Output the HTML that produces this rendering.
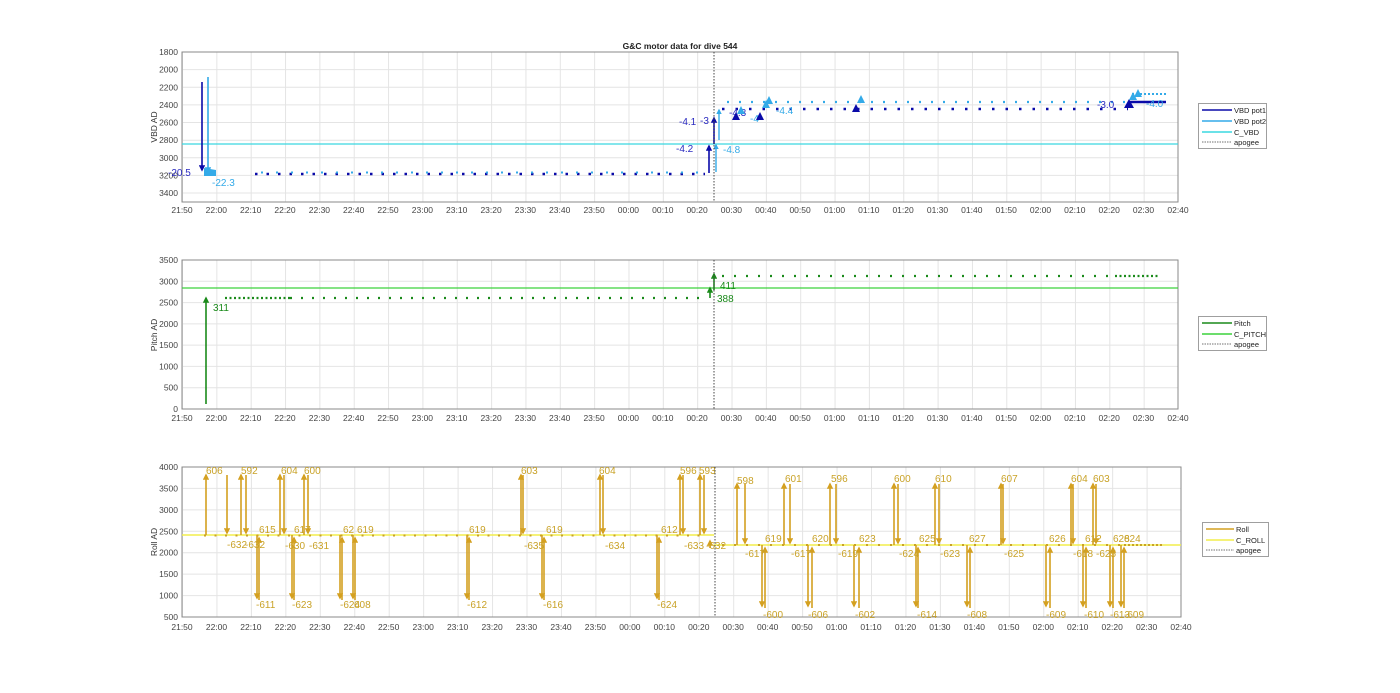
<!DOCTYPE html>
<html><head><meta charset="utf-8"><style>
html,body{margin:0;padding:0;background:#fff;width:1400px;height:693px;overflow:hidden}
svg{display:block;font-family:"Liberation Sans",sans-serif}
.t{font-size:8.5px;fill:#444;text-anchor:middle}
.yl{font-size:8.5px;fill:#444;text-anchor:end}
.g{font-size:10px;fill:#c9a227}
.lg{font-size:7.5px;fill:#222}
</style></head><body>
<svg width="1400" height="693" viewBox="0 0 1400 693">
<defs>
<pattern id="vg1" x="182" y="0" width="34.345" height="700" patternUnits="userSpaceOnUse"><line x1="0.5" y1="0" x2="0.5" y2="700" stroke="#e4e4e4" stroke-width="1"/></pattern>
<pattern id="vg3" x="182" y="0" width="34.45" height="700" patternUnits="userSpaceOnUse"><line x1="0.5" y1="0" x2="0.5" y2="700" stroke="#e4e4e4" stroke-width="1"/></pattern>
<marker id="ag" markerWidth="4" markerHeight="4" refX="3" refY="2" orient="auto" markerUnits="strokeWidth"><path d="M0,0 L4,2 L0,4z" fill="#d4a020"/></marker>
<marker id="ab" markerWidth="4" markerHeight="4" refX="3" refY="2" orient="auto" markerUnits="strokeWidth"><path d="M0,0 L4,2 L0,4z" fill="#0a0aa8"/></marker>
<marker id="al" markerWidth="4" markerHeight="4" refX="3" refY="2" orient="auto" markerUnits="strokeWidth"><path d="M0,0 L4,2 L0,4z" fill="#33aae8"/></marker>
<marker id="agr" markerWidth="4" markerHeight="4" refX="3" refY="2" orient="auto" markerUnits="strokeWidth"><path d="M0,0 L4,2 L0,4z" fill="#1a8a1a"/></marker>
</defs>

<text x="680" y="49" style="font-size:8.5px;font-weight:bold;fill:#222" text-anchor="middle">G&amp;C motor data for dive 544</text>

<!-- ========== PLOT 1 ========== -->
<rect x="182" y="52" width="996" height="150" fill="url(#vg1)"/>
<g stroke="#e4e4e4" stroke-width="1">
<line x1="182" y1="69.6" x2="1178" y2="69.6"/><line x1="182" y1="87.3" x2="1178" y2="87.3"/><line x1="182" y1="104.9" x2="1178" y2="104.9"/><line x1="182" y1="122.5" x2="1178" y2="122.5"/><line x1="182" y1="140.2" x2="1178" y2="140.2"/><line x1="182" y1="157.8" x2="1178" y2="157.8"/><line x1="182" y1="175.4" x2="1178" y2="175.4"/><line x1="182" y1="193" x2="1178" y2="193"/>
</g>
<rect x="182" y="52" width="996" height="150" fill="none" stroke="#8a8a8a" stroke-width="1"/>
<g class="yl"><text x="178" y="55">1800</text><text x="178" y="72.6">2000</text><text x="178" y="90.3">2200</text><text x="178" y="107.9">2400</text><text x="178" y="125.5">2600</text><text x="178" y="143.2">2800</text><text x="178" y="160.8">3000</text><text x="178" y="178.4">3200</text><text x="178" y="196">3400</text></g>
<text transform="translate(157,127) rotate(-90)" style="font-size:8.5px;fill:#333" text-anchor="middle">VBD AD</text>
<g class="t">
<text x="182" y="213">21:50</text><text x="216.3" y="213">22:00</text><text x="250.7" y="213">22:10</text><text x="285" y="213">22:20</text><text x="319.4" y="213">22:30</text><text x="353.7" y="213">22:40</text><text x="388" y="213">22:50</text><text x="422.4" y="213">23:00</text><text x="456.7" y="213">23:10</text><text x="491.1" y="213">23:20</text><text x="525.4" y="213">23:30</text><text x="559.7" y="213">23:40</text><text x="594.1" y="213">23:50</text><text x="628.4" y="213">00:00</text><text x="662.8" y="213">00:10</text><text x="697.1" y="213">00:20</text><text x="731.4" y="213">00:30</text><text x="765.8" y="213">00:40</text><text x="800.1" y="213">00:50</text><text x="834.5" y="213">01:00</text><text x="868.8" y="213">01:10</text><text x="903.1" y="213">01:20</text><text x="937.5" y="213">01:30</text><text x="971.8" y="213">01:40</text><text x="1006.2" y="213">01:50</text><text x="1040.5" y="213">02:00</text><text x="1074.8" y="213">02:10</text><text x="1109.2" y="213">02:20</text><text x="1143.5" y="213">02:30</text><text x="1178" y="213">02:40</text>
</g>
<line x1="182" y1="144" x2="1178" y2="144" stroke="#3ad8e0" stroke-width="1.3"/>
<line x1="255" y1="174" x2="705" y2="174" stroke="#0a0aa8" stroke-width="2.5" stroke-dasharray="2.5 9"/>
<line x1="261" y1="172.5" x2="705" y2="172.5" stroke="#33aae8" stroke-width="2" stroke-dasharray="2 13"/>
<line x1="722" y1="109" x2="1128" y2="109" stroke="#0a0aa8" stroke-width="2.5" stroke-dasharray="2.5 11"/>
<line x1="727" y1="102" x2="1128" y2="102" stroke="#33aae8" stroke-width="2.2" stroke-dasharray="2 10"/>
<line x1="1128" y1="102" x2="1166" y2="102" stroke="#0a0aa8" stroke-width="2.5"/>
<line x1="1132" y1="94" x2="1166" y2="94" stroke="#33aae8" stroke-width="2" stroke-dasharray="2 2"/>
<line x1="202" y1="82" x2="202" y2="170" stroke="#0a0aa8" stroke-width="1.6" marker-end="url(#ab)"/>
<line x1="208" y1="77" x2="208" y2="172" stroke="#33aae8" stroke-width="1.6" marker-end="url(#al)"/>
<path d="M204,168 l12,2 v6 h-12z" fill="#33aae8"/>
<text x="168" y="176" style="font-size:10px;fill:#2b2bc0">-20.5</text>
<text x="212" y="186" style="font-size:10px;fill:#33aae8">-22.3</text>
<line x1="709" y1="173" x2="709" y2="146" stroke="#0a0aa8" stroke-width="1.6" marker-end="url(#ab)"/>
<line x1="714" y1="144" x2="714" y2="118" stroke="#0a0aa8" stroke-width="1.6" marker-end="url(#ab)"/>
<line x1="716" y1="172" x2="716" y2="145" stroke="#33aae8" stroke-width="1.4" marker-end="url(#al)"/>
<line x1="719" y1="140" x2="719" y2="110" stroke="#33aae8" stroke-width="1.4" marker-end="url(#al)"/>
<text x="676" y="152" style="font-size:10px;fill:#2b2bc0">-4.2</text>
<text x="679" y="125" style="font-size:10px;fill:#2b2bc0">-4.1</text>
<text x="700" y="124" style="font-size:10px;fill:#2b2bc0">-3</text>
<text x="723" y="153" style="font-size:10px;fill:#33aae8">-4.8</text>
<text x="729" y="116" style="font-size:10px;fill:#2b2bc0">-4.3</text>
<text x="750" y="122" style="font-size:10px;fill:#33aae8">-4</text>
<text x="776" y="114" style="font-size:10px;fill:#33aae8">-4.4</text>
<g fill="#0a0aa8"><path d="M732,120 l4,-8 l4,8z"/><path d="M756,120 l4,-8 l4,8z"/><path d="M852,112 l4,-8 l4,8z"/><path d="M1124,108 l5,-9 l5,9z"/></g>
<g fill="#33aae8"><path d="M737,114 l4,-8 l4,8z"/><path d="M762,108 l4,-8 l4,8z"/><path d="M765,104 l4,-8 l4,8z"/><path d="M857,103 l4,-8 l4,8z"/><path d="M1129,100 l4,-8 l4,8z"/><path d="M1134,97 l4,-8 l4,8z"/></g>
<text x="1097" y="108" style="font-size:10px;fill:#2b2bc0">-3.0</text>
<text x="1146" y="107" style="font-size:10px;fill:#33aae8">-4.0</text>
<line x1="714" y1="52" x2="714" y2="202" stroke="#444" stroke-width="1" stroke-dasharray="1.5 1.5"/>
<rect x="1198.5" y="103.5" width="68" height="45" fill="#fff" stroke="#888" stroke-width="0.8"/>
<line x1="1202" y1="110" x2="1232" y2="110" stroke="#0a0aa8" stroke-width="1.5"/><text class="lg" x="1234" y="113">VBD pot1</text>
<line x1="1202" y1="121" x2="1232" y2="121" stroke="#33aae8" stroke-width="1.5"/><text class="lg" x="1234" y="124">VBD pot2</text>
<line x1="1202" y1="132" x2="1232" y2="132" stroke="#3ad8e0" stroke-width="1.5"/><text class="lg" x="1234" y="135">C_VBD</text>
<line x1="1202" y1="142" x2="1232" y2="142" stroke="#444" stroke-width="0.8" stroke-dasharray="1.5 1"/><text class="lg" x="1234" y="145">apogee</text>

<!-- ========== PLOT 2 ========== -->
<rect x="182" y="260" width="996" height="149" fill="url(#vg1)"/>
<g stroke="#e4e4e4" stroke-width="1">
<line x1="182" y1="281.3" x2="1178" y2="281.3"/><line x1="182" y1="302.6" x2="1178" y2="302.6"/><line x1="182" y1="323.9" x2="1178" y2="323.9"/><line x1="182" y1="345.1" x2="1178" y2="345.1"/><line x1="182" y1="366.4" x2="1178" y2="366.4"/><line x1="182" y1="387.7" x2="1178" y2="387.7"/>
</g>
<rect x="182" y="260" width="996" height="149" fill="none" stroke="#8a8a8a" stroke-width="1"/>
<g class="yl"><text x="178" y="263">3500</text><text x="178" y="284.3">3000</text><text x="178" y="305.6">2500</text><text x="178" y="326.9">2000</text><text x="178" y="348.1">1500</text><text x="178" y="369.4">1000</text><text x="178" y="390.7">500</text><text x="178" y="412">0</text></g>
<text transform="translate(157,335) rotate(-90)" style="font-size:8.5px;fill:#333" text-anchor="middle">Pitch AD</text>
<g class="t">
<text x="182" y="421">21:50</text><text x="216.3" y="421">22:00</text><text x="250.7" y="421">22:10</text><text x="285" y="421">22:20</text><text x="319.4" y="421">22:30</text><text x="353.7" y="421">22:40</text><text x="388" y="421">22:50</text><text x="422.4" y="421">23:00</text><text x="456.7" y="421">23:10</text><text x="491.1" y="421">23:20</text><text x="525.4" y="421">23:30</text><text x="559.7" y="421">23:40</text><text x="594.1" y="421">23:50</text><text x="628.4" y="421">00:00</text><text x="662.8" y="421">00:10</text><text x="697.1" y="421">00:20</text><text x="731.4" y="421">00:30</text><text x="765.8" y="421">00:40</text><text x="800.1" y="421">00:50</text><text x="834.5" y="421">01:00</text><text x="868.8" y="421">01:10</text><text x="903.1" y="421">01:20</text><text x="937.5" y="421">01:30</text><text x="971.8" y="421">01:40</text><text x="1006.2" y="421">01:50</text><text x="1040.5" y="421">02:00</text><text x="1074.8" y="421">02:10</text><text x="1109.2" y="421">02:20</text><text x="1143.5" y="421">02:30</text><text x="1178" y="421">02:40</text>
</g>
<line x1="182" y1="288" x2="1178" y2="288" stroke="#3cd23c" stroke-width="1.3"/>
<line x1="225" y1="298" x2="290" y2="298" stroke="#1a8a1a" stroke-width="2.2" stroke-dasharray="2 2.5"/>
<line x1="290" y1="298" x2="705" y2="298" stroke="#1a8a1a" stroke-width="2.2" stroke-dasharray="2 9"/>
<line x1="722" y1="276" x2="1115" y2="276" stroke="#1a8a1a" stroke-width="2.2" stroke-dasharray="2 10"/>
<line x1="1115" y1="276" x2="1160" y2="276" stroke="#1a8a1a" stroke-width="2.2" stroke-dasharray="2 2.5"/>
<line x1="206" y1="404" x2="206" y2="298" stroke="#1a8a1a" stroke-width="1.6" marker-end="url(#agr)"/>
<text x="213" y="311" style="font-size:10px;fill:#1a8a1a">311</text>
<line x1="710" y1="298" x2="710" y2="288" stroke="#1a8a1a" stroke-width="1.6" marker-end="url(#agr)"/>
<line x1="714" y1="290" x2="714" y2="274" stroke="#1a8a1a" stroke-width="1.6" marker-end="url(#agr)"/>
<text x="717" y="302" style="font-size:10px;fill:#1a8a1a">388</text>
<text x="720" y="289" style="font-size:10px;fill:#1a8a1a">411</text>
<line x1="714" y1="260" x2="714" y2="409" stroke="#444" stroke-width="1" stroke-dasharray="1.5 1.5"/>
<rect x="1198.5" y="316.5" width="68" height="34" fill="#fff" stroke="#888" stroke-width="0.8"/>
<line x1="1202" y1="323" x2="1232" y2="323" stroke="#1a8a1a" stroke-width="1.5"/><text class="lg" x="1234" y="326">Pitch</text>
<line x1="1202" y1="334" x2="1232" y2="334" stroke="#3cd23c" stroke-width="1.5"/><text class="lg" x="1234" y="337">C_PITCH</text>
<line x1="1202" y1="344" x2="1232" y2="344" stroke="#444" stroke-width="0.8" stroke-dasharray="1.5 1"/><text class="lg" x="1234" y="347">apogee</text>

<!-- ========== PLOT 3 ========== -->
<rect x="182" y="467" width="999" height="150" fill="url(#vg3)"/>
<g stroke="#e4e4e4" stroke-width="1">
<line x1="182" y1="488.4" x2="1181" y2="488.4"/><line x1="182" y1="509.9" x2="1181" y2="509.9"/><line x1="182" y1="531.3" x2="1181" y2="531.3"/><line x1="182" y1="552.7" x2="1181" y2="552.7"/><line x1="182" y1="574.1" x2="1181" y2="574.1"/><line x1="182" y1="595.6" x2="1181" y2="595.6"/>
</g>
<rect x="182" y="467" width="999" height="150" fill="none" stroke="#8a8a8a" stroke-width="1"/>
<g class="yl"><text x="178" y="470">4000</text><text x="178" y="491.4">3500</text><text x="178" y="512.9">3000</text><text x="178" y="534.3">2500</text><text x="178" y="555.7">2000</text><text x="178" y="577.1">1500</text><text x="178" y="598.6">1000</text><text x="178" y="620">500</text></g>
<text transform="translate(157,542) rotate(-90)" style="font-size:8.5px;fill:#333" text-anchor="middle">Roll AD</text>
<g class="t">
<text x="182" y="630">21:50</text><text x="216.5" y="630">22:00</text><text x="250.9" y="630">22:10</text><text x="285.4" y="630">22:20</text><text x="319.8" y="630">22:30</text><text x="354.3" y="630">22:40</text><text x="388.7" y="630">22:50</text><text x="423.2" y="630">23:00</text><text x="457.6" y="630">23:10</text><text x="492.1" y="630">23:20</text><text x="526.5" y="630">23:30</text><text x="561" y="630">23:40</text><text x="595.4" y="630">23:50</text><text x="629.9" y="630">00:00</text><text x="664.3" y="630">00:10</text><text x="698.8" y="630">00:20</text><text x="733.2" y="630">00:30</text><text x="767.7" y="630">00:40</text><text x="802.1" y="630">00:50</text><text x="836.6" y="630">01:00</text><text x="871" y="630">01:10</text><text x="905.5" y="630">01:20</text><text x="939.9" y="630">01:30</text><text x="974.4" y="630">01:40</text><text x="1008.8" y="630">01:50</text><text x="1043.3" y="630">02:00</text><text x="1077.7" y="630">02:10</text><text x="1112.2" y="630">02:20</text><text x="1146.6" y="630">02:30</text><text x="1181" y="630">02:40</text>
</g>
<line x1="182" y1="535" x2="714" y2="535" stroke="#f2ee4c" stroke-width="1.5"/>
<line x1="714" y1="545" x2="1181" y2="545" stroke="#f2ee4c" stroke-width="1.5"/>
<line x1="204" y1="535.5" x2="705" y2="535.5" stroke="#c9a227" stroke-width="2" stroke-dasharray="2 8.5"/>
<line x1="722" y1="545" x2="1120" y2="545" stroke="#c9a227" stroke-width="2" stroke-dasharray="2 10"/>
<line x1="1124" y1="545" x2="1163" y2="545" stroke="#c9a227" stroke-width="2" stroke-dasharray="2 2"/>
<g stroke="#d4a020" stroke-width="1.6">
<!-- pre-apogee -->
<line x1="206" y1="535" x2="206" y2="475" marker-end="url(#ag)"/>
<line x1="227" y1="475" x2="227" y2="533" marker-end="url(#ag)"/>
<line x1="241" y1="535" x2="241" y2="475" marker-end="url(#ag)"/>
<line x1="246" y1="475" x2="246" y2="533" marker-end="url(#ag)"/>
<line x1="257" y1="535" x2="257" y2="598" marker-end="url(#ag)"/><line x1="259" y1="600" x2="259" y2="538" marker-end="url(#ag)"/>
<line x1="280" y1="535" x2="280" y2="475" marker-end="url(#ag)"/><line x1="284" y1="475" x2="284" y2="533" marker-end="url(#ag)"/>
<line x1="292" y1="535" x2="292" y2="598" marker-end="url(#ag)"/><line x1="294" y1="600" x2="294" y2="538" marker-end="url(#ag)"/>
<line x1="304" y1="535" x2="304" y2="475" marker-end="url(#ag)"/><line x1="308" y1="475" x2="308" y2="533" marker-end="url(#ag)"/>
<line x1="340" y1="535" x2="340" y2="598" marker-end="url(#ag)"/><line x1="342" y1="600" x2="342" y2="538" marker-end="url(#ag)"/>
<line x1="353" y1="535" x2="353" y2="598" marker-end="url(#ag)"/><line x1="355" y1="600" x2="355" y2="538" marker-end="url(#ag)"/>
<line x1="467" y1="535" x2="467" y2="598" marker-end="url(#ag)"/><line x1="469" y1="600" x2="469" y2="538" marker-end="url(#ag)"/>
<line x1="521" y1="535" x2="521" y2="475" marker-end="url(#ag)"/><line x1="523" y1="475" x2="523" y2="533" marker-end="url(#ag)"/>
<line x1="542" y1="535" x2="542" y2="598" marker-end="url(#ag)"/><line x1="544" y1="600" x2="544" y2="538" marker-end="url(#ag)"/>
<line x1="600" y1="535" x2="600" y2="475" marker-end="url(#ag)"/><line x1="603" y1="475" x2="603" y2="533" marker-end="url(#ag)"/>
<line x1="657" y1="535" x2="657" y2="598" marker-end="url(#ag)"/><line x1="659" y1="600" x2="659" y2="538" marker-end="url(#ag)"/>
<line x1="680" y1="535" x2="680" y2="475" marker-end="url(#ag)"/><line x1="683" y1="475" x2="683" y2="533" marker-end="url(#ag)"/>
<line x1="700" y1="535" x2="700" y2="475" marker-end="url(#ag)"/><line x1="704" y1="475" x2="704" y2="533" marker-end="url(#ag)"/>
<line x1="710" y1="548" x2="710" y2="541" marker-end="url(#ag)"/>
<!-- post-apogee -->
<line x1="737" y1="545" x2="737" y2="484" marker-end="url(#ag)"/><line x1="745" y1="484" x2="745" y2="543" marker-end="url(#ag)"/>
<line x1="762" y1="545" x2="762" y2="606" marker-end="url(#ag)"/><line x1="765" y1="608" x2="765" y2="548" marker-end="url(#ag)"/>
<line x1="784" y1="545" x2="784" y2="484" marker-end="url(#ag)"/><line x1="790" y1="484" x2="790" y2="543" marker-end="url(#ag)"/>
<line x1="808" y1="545" x2="808" y2="606" marker-end="url(#ag)"/><line x1="812" y1="608" x2="812" y2="548" marker-end="url(#ag)"/>
<line x1="830" y1="545" x2="830" y2="484" marker-end="url(#ag)"/><line x1="836" y1="484" x2="836" y2="543" marker-end="url(#ag)"/>
<line x1="854" y1="545" x2="854" y2="606" marker-end="url(#ag)"/><line x1="859" y1="608" x2="859" y2="548" marker-end="url(#ag)"/>
<line x1="894" y1="545" x2="894" y2="484" marker-end="url(#ag)"/><line x1="898" y1="484" x2="898" y2="543" marker-end="url(#ag)"/>
<line x1="916" y1="545" x2="916" y2="606" marker-end="url(#ag)"/><line x1="918" y1="608" x2="918" y2="548" marker-end="url(#ag)"/>
<line x1="935" y1="545" x2="935" y2="484" marker-end="url(#ag)"/><line x1="939" y1="484" x2="939" y2="543" marker-end="url(#ag)"/>
<line x1="967" y1="545" x2="967" y2="606" marker-end="url(#ag)"/><line x1="970" y1="608" x2="970" y2="548" marker-end="url(#ag)"/>
<line x1="1001" y1="545" x2="1001" y2="484" marker-end="url(#ag)"/><line x1="1003" y1="484" x2="1003" y2="543" marker-end="url(#ag)"/>
<line x1="1046" y1="545" x2="1046" y2="606" marker-end="url(#ag)"/><line x1="1050" y1="608" x2="1050" y2="548" marker-end="url(#ag)"/>
<line x1="1071" y1="545" x2="1071" y2="484" marker-end="url(#ag)"/><line x1="1073" y1="484" x2="1073" y2="543" marker-end="url(#ag)"/>
<line x1="1083" y1="545" x2="1083" y2="606" marker-end="url(#ag)"/><line x1="1086" y1="608" x2="1086" y2="548" marker-end="url(#ag)"/>
<line x1="1093" y1="545" x2="1093" y2="484" marker-end="url(#ag)"/><line x1="1096" y1="484" x2="1096" y2="543" marker-end="url(#ag)"/>
<line x1="1110" y1="545" x2="1110" y2="606" marker-end="url(#ag)"/><line x1="1113" y1="608" x2="1113" y2="548" marker-end="url(#ag)"/>
<line x1="1121" y1="545" x2="1121" y2="606" marker-end="url(#ag)"/><line x1="1124" y1="608" x2="1124" y2="548" marker-end="url(#ag)"/>
</g>
<g class="g">
<text x="206" y="474">606</text><text x="241" y="474">592</text><text x="281" y="474">604</text><text x="304" y="474">600</text><text x="521" y="474">603</text><text x="599" y="474">604</text><text x="680" y="474">596</text><text x="699" y="474">593</text>
<text x="227" y="548">-632</text><text x="245" y="548">-632</text><text x="285" y="549">-630</text><text x="309" y="549">-631</text><text x="524" y="549">-635</text><text x="605" y="549">-634</text><text x="684" y="549">-633</text><text x="706" y="549">-632</text>
<text x="259" y="533">615</text><text x="294" y="533">617</text><text x="343" y="533">62</text><text x="357" y="533">619</text><text x="469" y="533">619</text><text x="546" y="533">619</text><text x="661" y="533">612</text>
<text x="256" y="608">-611</text><text x="292" y="608">-623</text><text x="340" y="608">-624</text><text x="354" y="608">608</text><text x="467" y="608">-612</text><text x="543" y="608">-616</text><text x="657" y="608">-624</text>
<text x="737" y="484">598</text><text x="785" y="482">601</text><text x="831" y="482">596</text><text x="894" y="482">600</text><text x="935" y="482">610</text><text x="1001" y="482">607</text><text x="1071" y="482">604</text><text x="1093" y="482">603</text>
<text x="745" y="557">-617</text><text x="791" y="557">-617</text><text x="838" y="557">-619</text><text x="899" y="557">-624</text><text x="940" y="557">-623</text><text x="1004" y="557">-625</text><text x="1073" y="557">-618</text><text x="1096" y="557">-625</text>
<text x="765" y="542">619</text><text x="812" y="542">620</text><text x="859" y="542">623</text><text x="919" y="542">625</text><text x="969" y="542">627</text><text x="1049" y="542">626</text><text x="1085" y="542">612</text><text x="1113" y="542">628</text><text x="1124" y="542">624</text>
<text x="763" y="618">-600</text><text x="808" y="618">-606</text><text x="855" y="618">-602</text><text x="917" y="618">-614</text><text x="967" y="618">-608</text><text x="1046" y="618">-609</text><text x="1084" y="618">-610</text><text x="1110" y="618">-613</text><text x="1124" y="618">-609</text>
</g>
<line x1="715" y1="467" x2="715" y2="617" stroke="#444" stroke-width="1" stroke-dasharray="1.5 1.5"/>
<rect x="1202.5" y="522.5" width="66" height="34" fill="#fff" stroke="#888" stroke-width="0.8"/>
<line x1="1206" y1="529" x2="1234" y2="529" stroke="#d4a020" stroke-width="1.5"/><text class="lg" x="1236" y="532">Roll</text>
<line x1="1206" y1="540" x2="1234" y2="540" stroke="#f2ee4c" stroke-width="1.5"/><text class="lg" x="1236" y="543">C_ROLL</text>
<line x1="1206" y1="550" x2="1234" y2="550" stroke="#444" stroke-width="0.8" stroke-dasharray="1.5 1"/><text class="lg" x="1236" y="553">apogee</text>
</svg>
</body></html>
